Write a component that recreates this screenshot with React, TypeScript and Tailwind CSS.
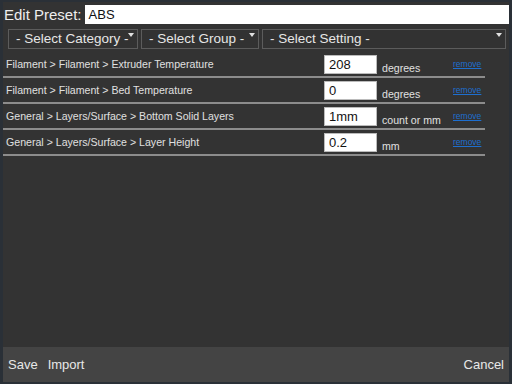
import React from "react";

const rows = [
  { label: "Filament > Filament > Extruder Temperature", value: "208", unit: "degrees" },
  { label: "Filament > Filament > Bed Temperature", value: "0", unit: "degrees" },
  { label: "General > Layers/Surface > Bottom Solid Layers", value: "1mm", unit: "count or mm" },
  { label: "General > Layers/Surface > Layer Height", value: "0.2", unit: "mm" },
];

function Select({ label, w }: { label: string; w: string }) {
  return (
    <div className={`relative h-[20px] ${w} border border-[#5c5c5c] bg-[#323232] flex items-center pl-[7px] text-[13.5px] text-[#e6e6e6] leading-none whitespace-nowrap`}>
      <span>{label}</span>
      <span className="absolute right-[3px] top-[3px] w-0 h-0 border-l-[3px] border-r-[3px] border-t-[4px] border-l-transparent border-r-transparent border-t-[#e0e0e0]" />
    </div>
  );
}

export default function App() {
  return (
    <div
      className="w-[512px] h-[384px] bg-[#2a3037] px-[3px] pt-[2px] pb-[2px] flex flex-col"
      style={{ fontFamily: '"Liberation Sans", Arial, sans-serif' }}
    >
      <div className="flex-1 bg-[#333333] flex flex-col">
        <div className="flex items-center h-[19px] mt-[3px]">
          <span className="shrink-0 whitespace-nowrap text-[15px] text-[#eeeeee] ml-[1px] leading-none">Edit Preset:</span>
          <div className="ml-[3px] flex-1 h-[19px] bg-white flex items-center pl-[4px] text-[13px] text-[#111] leading-none">ABS</div>
        </div>
        <div className="flex mt-[5px] ml-[5px] gap-[3px]">
          <Select label="- Select Category -" w="w-[130px]" />
          <Select label="- Select Group -" w="w-[118px]" />
          <Select label="- Select Setting -" w="w-[244px]" />
        </div>
        <div className="mt-[3px] flex flex-col">
          {rows.map((r) => (
            <div key={r.label} className="flex flex-col">
              <div className="h-[24px] flex items-center">
                <span className="w-[321px] pl-[3px] text-[10.6px] text-[#e0e0e0] leading-none whitespace-nowrap">{r.label}</span>
                <div className="w-[53px] h-[19px] mt-[3px] self-start bg-white border border-[#bbb] flex items-center pl-[4px] text-[13px] text-[#111] leading-none">
                  {r.value}
                </div>
                <span className="w-[76px] pl-[5px] mt-[9px] text-[10.6px] text-[#e0e0e0] leading-none whitespace-nowrap">{r.unit}</span>
                <span className="text-[8.5px] text-[#1e6fd0] underline leading-none">remove</span>
              </div>
              <div className="w-[482px] h-[2px] bg-[#8c8c8c]" />
            </div>
          ))}
        </div>
        <div className="flex-1" />
        <div className="h-[35px] bg-[#444444] flex items-center text-[13px] text-[#e8e8e8] leading-none px-[5px]">
          <span>Save</span>
          <span className="ml-[10px]">Import</span>
          <span className="ml-auto">Cancel</span>
        </div>
      </div>
    </div>
  );
}
